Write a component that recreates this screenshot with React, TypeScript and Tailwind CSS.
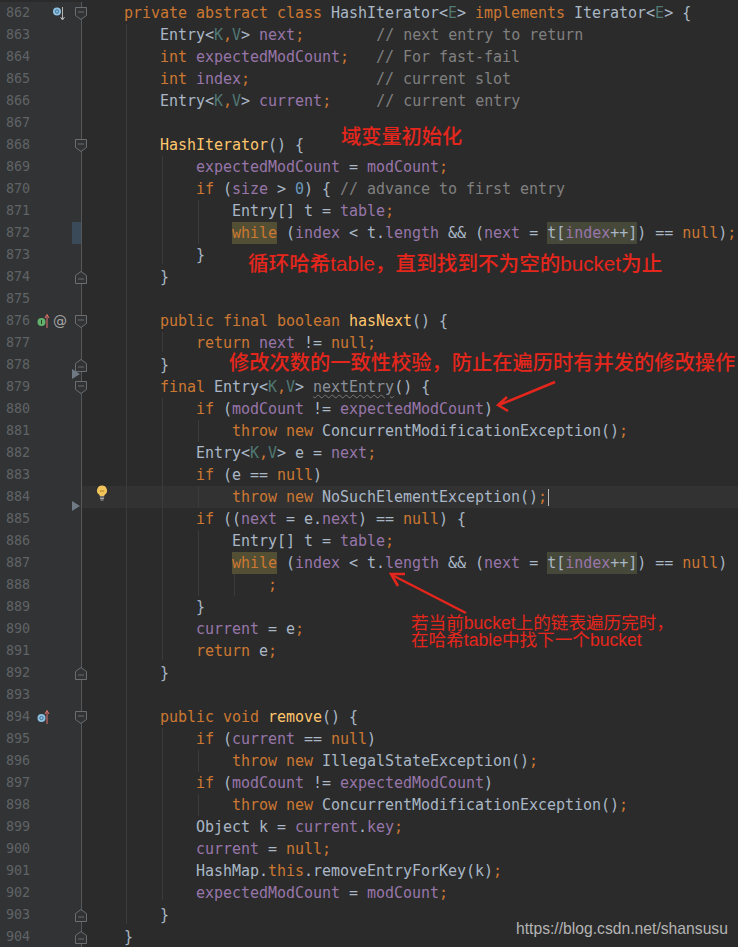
type Tone = 'k' | 't' | 'f' | 'g' | 'c' | 'm' | 'n' | 'u';
type Tok = [Tone, string] | ['hl' | 'hk', string, Tone?];

const tone: Record<Tone, string> = {
  k: 'text-[#cc7832]',
  t: 'text-[#a9b7c6]',
  f: 'text-[#9876aa]',
  g: 'text-[#507874]',
  c: 'text-[#808080]',
  m: 'text-[#ffc66d]',
  n: 'text-[#6897bb]',
  u: 'text-[#8a9099] underline decoration-wavy decoration-[#777] decoration-1 underline-offset-2',
};

const entry: Tok[] = [['t', 'Entry<'], ['g', 'K'], ['k', ','], ['g', 'V'], ['t', '>']];

const whileHead = (end: Tok[]): Tok[] => [
  ['t', '            '],
  ['hk', 'while'],
  ['t', ' ('],
  ['f', 'index'],
  ['t', ' < t.'],
  ['f', 'length'],
  ['t', ' && ('],
  ['f', 'next'],
  ['t', ' = '],
  ['hl', 't['],
  ['hl', 'index', 'f'],
  ['hl', '++]'],
  ['t', ') == '],
  ['k', 'null'],
  ['t', ')'],
  ...end,
];

const lines: Tok[][] = [
  [['k', 'private abstract class '], ['t', 'HashIterator<'], ['g', 'E'], ['t', '> '], ['k', 'implements '], ['t', 'Iterator<'], ['g', 'E'], ['t', '> {']],
  [['t', '    '], ...entry, ['t', ' '], ['f', 'next'], ['k', ';'], ['c', '        // next entry to return']],
  [['k', '    int '], ['f', 'expectedModCount'], ['k', ';'], ['c', '   // For fast-fail']],
  [['k', '    int '], ['f', 'index'], ['k', ';'], ['c', '              // current slot']],
  [['t', '    '], ...entry, ['t', ' '], ['f', 'current'], ['k', ';'], ['c', '     // current entry']],
  [],
  [['m', '    HashIterator'], ['t', '() {']],
  [['f', '        expectedModCount'], ['t', ' = '], ['f', 'modCount'], ['k', ';']],
  [['k', '        if '], ['t', '('], ['f', 'size'], ['t', ' > '], ['n', '0'], ['t', ') { '], ['c', '// advance to first entry']],
  [['t', '            Entry[] t = '], ['f', 'table'], ['k', ';']],
  whileHead([['k', ';']]),
  [['t', '        }']],
  [['t', '    }']],
  [],
  [['k', '    public final boolean '], ['m', 'hasNext'], ['t', '() {']],
  [['k', '        return '], ['f', 'next'], ['t', ' != '], ['k', 'null;']],
  [['t', '    }']],
  [['k', '    final '], ...entry, ['t', ' '], ['u', 'nextEntry'], ['t', '() {']],
  [['k', '        if '], ['t', '('], ['f', 'modCount'], ['t', ' != '], ['f', 'expectedModCount'], ['t', ')']],
  [['k', '            throw new '], ['t', 'ConcurrentModificationException()'], ['k', ';']],
  [['t', '        '], ...entry, ['t', ' e = '], ['f', 'next'], ['k', ';']],
  [['k', '        if '], ['t', '(e == '], ['k', 'null'], ['t', ')']],
  [['k', '            throw new '], ['t', 'NoSuchElementException()'], ['k', ';']],
  [['k', '        if '], ['t', '(('], ['f', 'next'], ['t', ' = e.'], ['f', 'next'], ['t', ') == '], ['k', 'null'], ['t', ') {']],
  [['t', '            Entry[] t = '], ['f', 'table'], ['k', ';']],
  whileHead([]),
  [['k', '                ;']],
  [['t', '        }']],
  [['f', '        current'], ['t', ' = e'], ['k', ';']],
  [['k', '        return '], ['t', 'e'], ['k', ';']],
  [['t', '    }']],
  [],
  [['k', '    public void '], ['m', 'remove'], ['t', '() {']],
  [['k', '        if '], ['t', '('], ['f', 'current'], ['t', ' == '], ['k', 'null'], ['t', ')']],
  [['k', '            throw new '], ['t', 'IllegalStateException()'], ['k', ';']],
  [['k', '        if '], ['t', '('], ['f', 'modCount'], ['t', ' != '], ['f', 'expectedModCount'], ['t', ')']],
  [['k', '            throw new '], ['t', 'ConcurrentModificationException()'], ['k', ';']],
  [['t', '        Object k = '], ['f', 'current'], ['t', '.'], ['f', 'key'], ['k', ';']],
  [['f', '        current'], ['t', ' = '], ['k', 'null;']],
  [['t', '        HashMap.'], ['k', 'this'], ['t', '.removeEntryForKey(k)'], ['k', ';']],
  [['f', '        expectedModCount'], ['t', ' = '], ['f', 'modCount'], ['k', ';']],
  [['t', '    }']],
  [['t', '}']],
];

const foldOpen = [862, 868, 876, 879, 894];
const foldClose = [874, 878, 892, 903, 904];

function Fold({ up }: { up?: boolean }) {
  return (
    <svg width="12" height="13" viewBox="0 0 12 13" className="shrink-0" fill="#313335" stroke="#6b6e70">
      <path d={up ? 'M.5 12.5V4.500L6 .5l5.500 4v8z' : 'M.5.5h11v8L6 12.500.5 8.500z'} />
      <path d={up ? 'M3 8h6' : 'M3 5h6'} />
    </svg>
  );
}

function UpArrowDot({ fill, ring }: { fill: string; ring?: string }) {
  return (
    <svg width="14" height="16" viewBox="0 0 14 16" className="shrink-0">
      <circle cx="5.500" cy="9" r="4" fill={fill} />
      {ring ? <circle cx="5.500" cy="9" r="1.700" fill="none" stroke={ring} /> : <path d="M5.500 7v4" stroke="#24472a" />}
      <path d="M11 15V2.500M9 5l2-3.500L13 5" fill="none" stroke="#e0746c" />
    </svg>
  );
}

// the icon column of the gutter, between the number and the fold marker
function GutterIcon({ line }: { line: number }) {
  if (line === 862)
    return (
      <svg width="14" height="16" viewBox="0 0 14 16" className="ml-[15px] shrink-0">
        <circle cx="6" cy="6.500" r="4" fill="#8fc1e3" />
        <circle cx="6" cy="6.500" r="1.700" fill="none" stroke="#3f6f8f" />
        <path d="M11.500 2v12M9.500 12l2 3 2-3" fill="none" stroke="#b5b5b5" />
      </svg>
    );
  if (line === 876)
    return (
      <>
        <UpArrowDot fill="#62b26d" />
        <span className="ml-[3px] font-['DejaVu_Sans',sans-serif] text-[14px] leading-[18px] text-[#a5a5a5]">@</span>
      </>
    );
  if (line === 894) return <UpArrowDot fill="#8fc1e3" ring="#3f6f8f" />;
  return null;
}

function Row({ line, toks }: { line: number; toks: Tok[] }) {
  const caret = line === 884;
  return (
    <div className="flex h-[22px] leading-[22px]">
      <div className="relative z-10 flex w-[82px] shrink-0 items-center border-r border-[#555759] bg-[#313335]">
        <span className="w-[36px] shrink-0 pl-[6px] text-[13.4px] text-[#606366]">{line}</span>
        <span className="flex w-[39px] shrink-0 items-center">
          <GutterIcon line={line} />
        </span>
        {foldOpen.includes(line) && <Fold />}
        {foldClose.includes(line) && <Fold up />}
        {line === 872 && <div className="absolute right-0 top-0 h-full w-[9px] bg-[#3a4a59]" />}
      </div>
      <div className={`flex-1 whitespace-pre pl-[42px] text-[15px] tracking-[-0.03px] ${caret ? 'bg-[#323232]' : ''}`}>
        {toks.map((tok, i) => {
          if (tok[0] === 'hk') return <span key={i} className="bg-[#524f35] py-[2px] text-[#cc7832]">{tok[1]}</span>;
          if (tok[0] === 'hl') return <span key={i} className={`bg-[#46483a] py-[2px] ${tone[(tok[2] as Tone) ?? 't']}`}>{tok[1]}</span>;
          return <span key={i} className={tone[tok[0] as Tone]}>{tok[1]}</span>;
        })}
        {caret && <span className="ml-px inline-block h-[17px] w-px translate-y-[3px] bg-[#bbb] align-top" />}
      </div>
    </div>
  );
}

// indent guides run over the rows
const guides = [
  'left-[126px] top-[24px] h-[900px]',
  'left-[162px] top-[156px] h-[108px]',
  'left-[162px] top-[332px] h-[20px]',
  'left-[162px] top-[398px] h-[262px]',
  'left-[162px] top-[728px] h-[172px]',
  'left-[198px] top-[200px] h-[44px]',
  'left-[198px] top-[420px] h-[22px]',
  'left-[198px] top-[486px] h-[22px]',
  'left-[198px] top-[530px] h-[66px]',
  'left-[198px] top-[750px] h-[22px]',
  'left-[198px] top-[794px] h-[22px]',
  'left-[234px] top-[574px] h-[22px]',
];

const note = "absolute whitespace-nowrap font-['Liberation_Sans','Noto_Sans_CJK_SC',sans-serif] text-[#e5261c]";

export default function App() {
  return (
    <div className="relative h-[947px] w-[738px] overflow-hidden bg-[#2b2b2b] pt-[2px] font-['DejaVu_Sans_Mono',monospace]">
      {lines.map((toks, i) => (
        <Row key={i} line={862 + i} toks={toks} />
      ))}

      {guides.map((cls) => (
        <div key={cls} className={`absolute w-px bg-[#3b3b3b] ${cls}`} />
      ))}

      <svg width="8" height="10" viewBox="0 0 8 10" className="absolute left-[72px] top-[369px] z-20"><path d="M0 0l8 5-8 5z" fill="#6f7a85" /></svg>
      <svg width="8" height="10" viewBox="0 0 8 10" className="absolute left-[72px] top-[501px] z-20"><path d="M0 0l8 5-8 5z" fill="#6f7a85" /></svg>

      <svg width="12" height="16" viewBox="0 0 12 16" className="absolute left-[96px] top-[485px]">
        <path d="M6 .5a5 5 0 0 0-3 9c.6.6.7 1 .8 1.500h4.400c.1-.5.2-.9.8-1.500a5 5 0 0 0-3-9z" fill="#f2c55c" />
        <path d="M4 5l1 2 1-2 1 2 1-2" fill="none" stroke="#b98a2c" strokeWidth=".7" />
        <path d="M3.800 12h4.400M4 13.500h4M4.500 15h3" stroke="#a8a8a8" />
      </svg>

      <div className={`${note} left-[341px] top-[123px] text-[20.2px] font-medium leading-[28px]`}>域变量初始化</div>
      <div className={`${note} left-[248px] top-[250px] text-[20.6px] font-medium leading-[28px]`}>循环哈希table，直到找到不为空的bucket为止</div>
      <div className={`${note} left-[229px] top-[349px] text-[20.25px] font-medium leading-[28px]`}>修改次数的一致性校验，防止在遍历时有并发的修改操作</div>
      <div className={`${note} left-[411px] top-[615px] text-[17.6px] leading-[17px]`}>
        若当前bucket上的链表遍历完时，
        <br />
        在哈希table中找下一个bucket
      </div>

      <svg width="738" height="947" className="pointer-events-none absolute left-0 top-0" fill="none" stroke="#e5261c" strokeWidth="2.500">
        <path d="M555 382L499 405" />
        <path d="M507 397l-9 8 10 6" />
        <path d="M466 613L392 575" />
        <path d="M405 574l-14 0 7 12" />
      </svg>

      <div className="absolute left-[516px] top-[920px] whitespace-nowrap font-['Liberation_Sans',sans-serif] text-[15.7px] leading-[18px] text-[#b4b4b4]">https://blog.csdn.net/shansusu</div>
    </div>
  );
}
